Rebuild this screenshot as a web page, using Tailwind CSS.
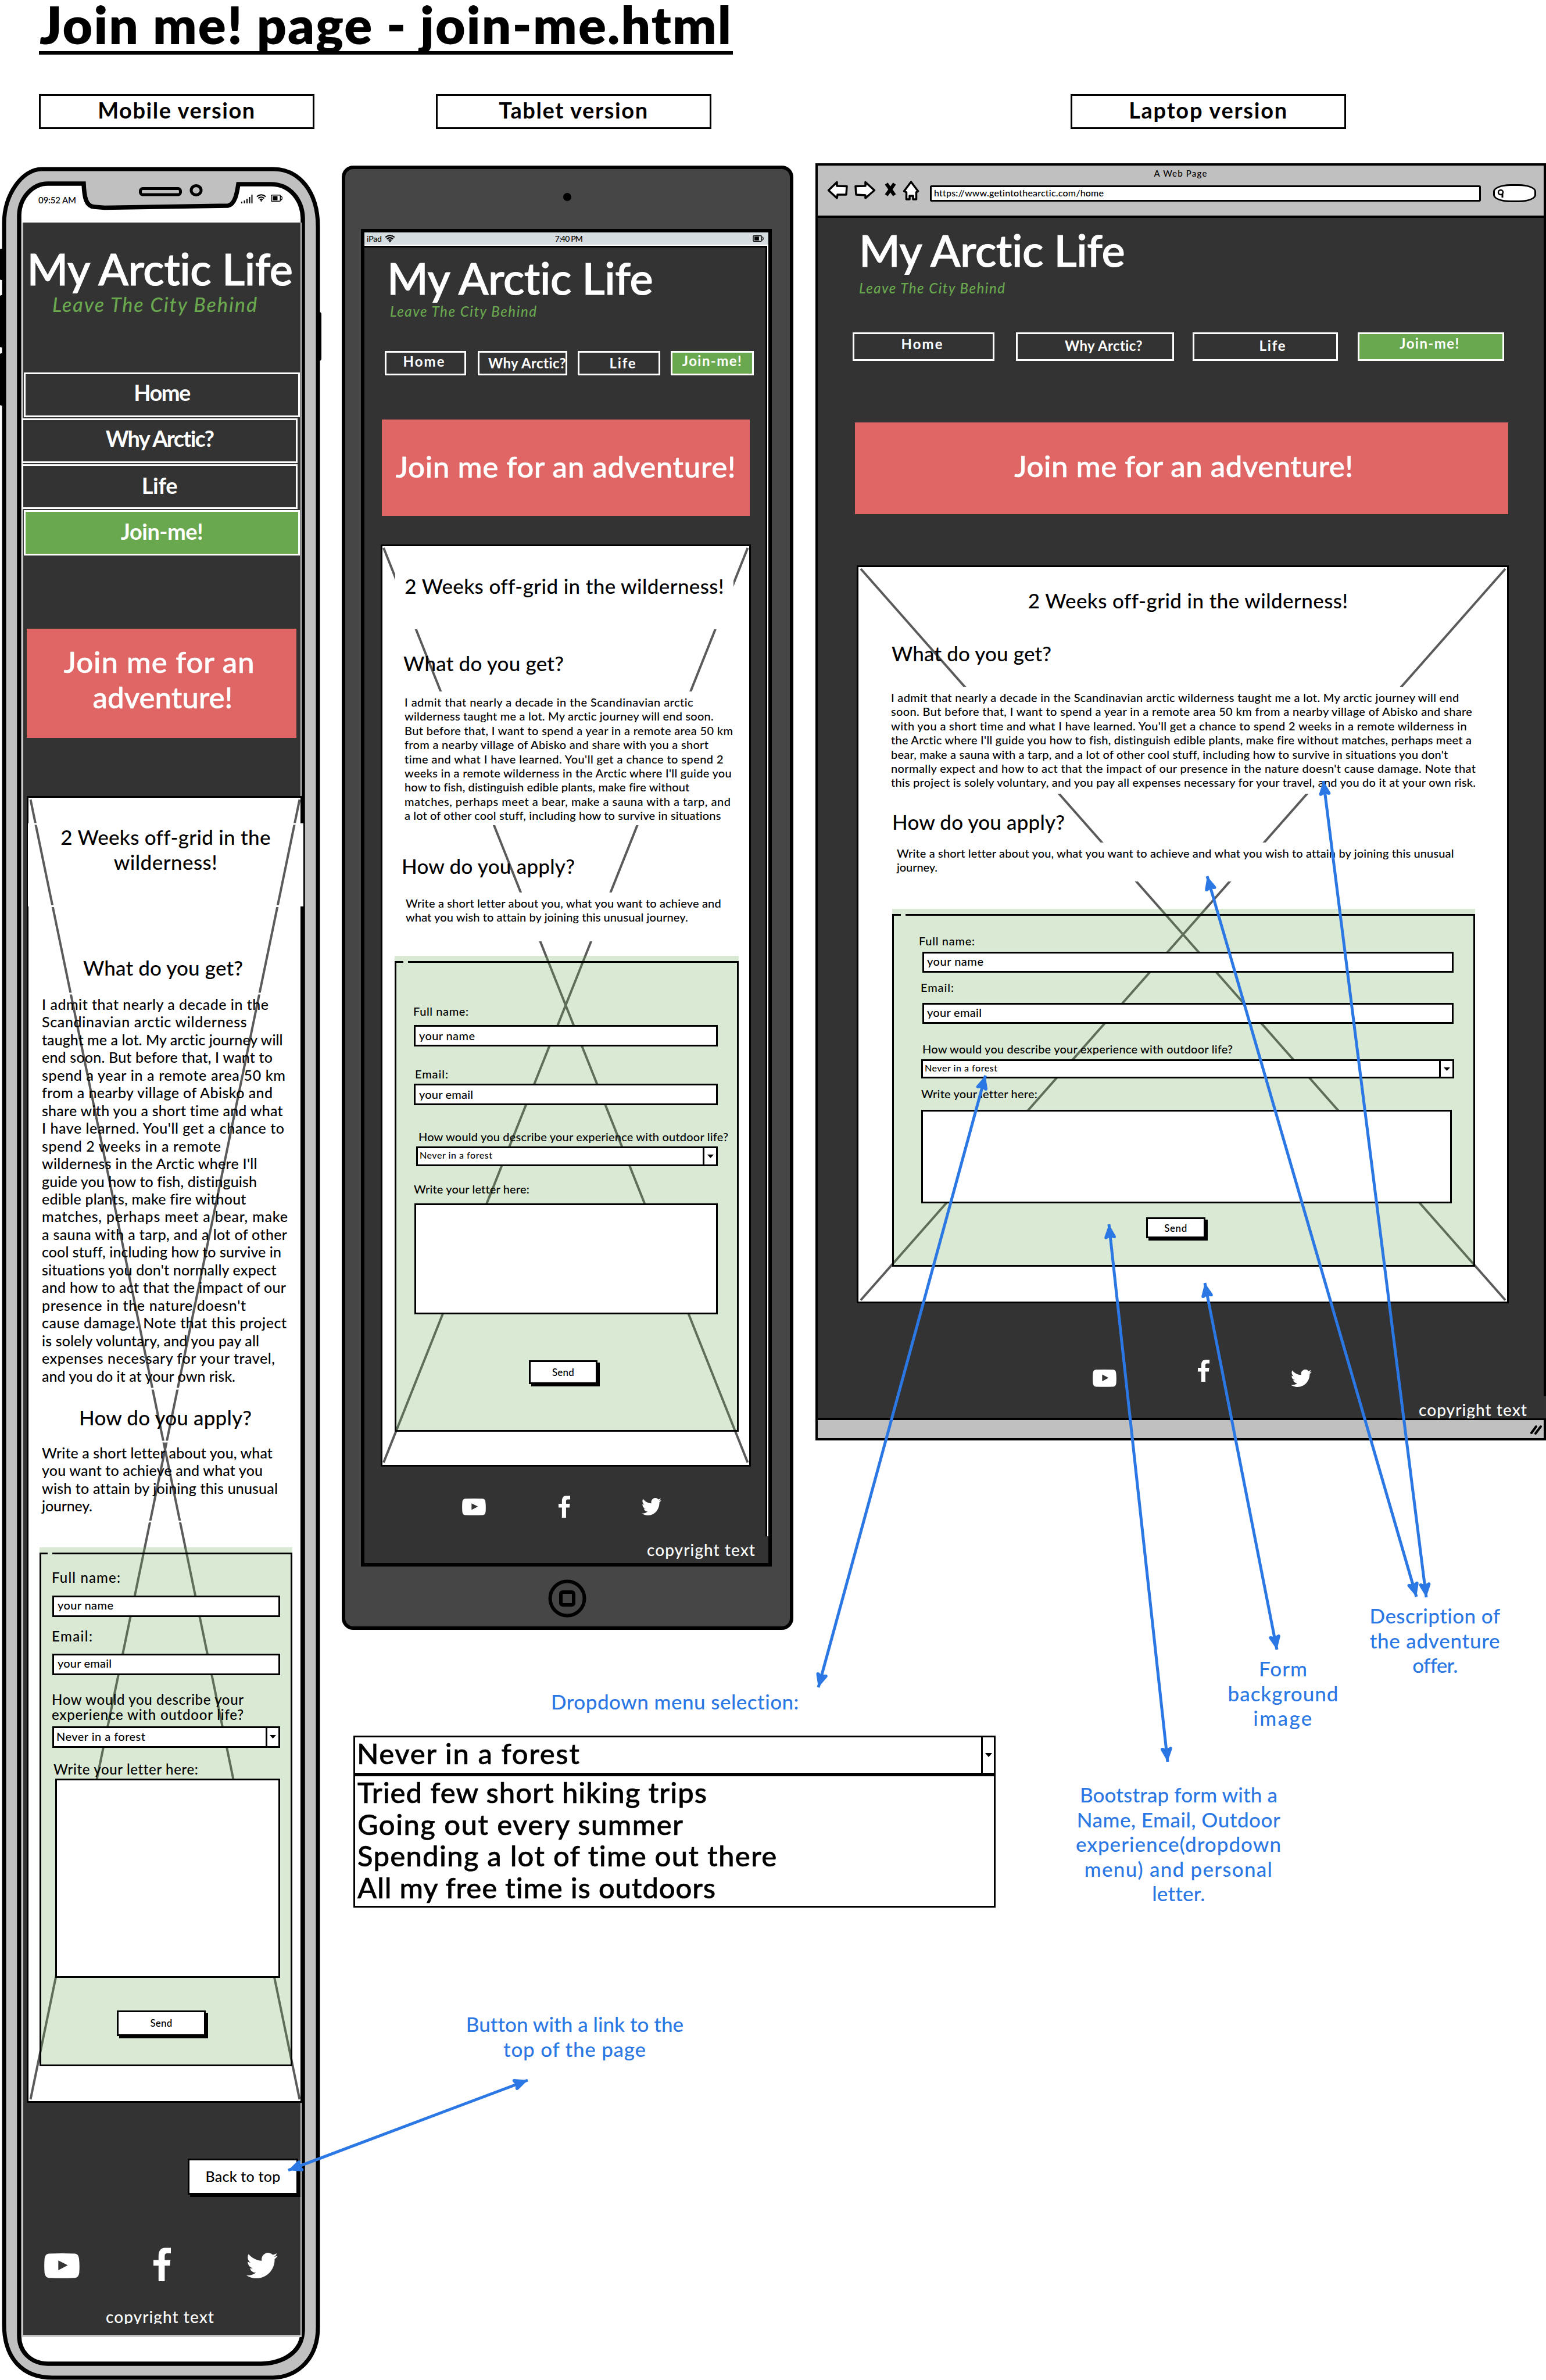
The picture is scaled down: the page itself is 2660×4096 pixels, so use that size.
<!DOCTYPE html>
<html lang="en">
<head>
<meta charset="utf-8">
<title>Join me! page - join-me.html</title>
<script src="https://cdn.jsdelivr.net/npm/@tailwindcss/browser@4"></script>
</head>
<body class="bg-white">
<svg class="hidden">
  <symbol id="yt" viewBox="0 0 168 101" preserveAspectRatio="none"><path fill-rule="evenodd" d="M22 1 Q84 -1 146 1 Q162 2 165 20 Q169 50 166 80 Q163 98 146 99 Q84 102 22 99 Q5 98 2 80 Q-1 50 2 20 Q5 2 22 1Z M67 29 V68 L112 48Z"/></symbol>
  <symbol id="fb" viewBox="0 0 82 135" preserveAspectRatio="none"><path d="M24 135V73H0V50H24V34C24 12 36 0 56 1H82V23H66C56 23 53 27 53 34V50H80L77 73H53V135Z"/></symbol>
  <symbol id="tw" viewBox="0 2.2 24 19.6" preserveAspectRatio="none"><path d="M23.953 4.57a10 10 0 01-2.825.775 4.958 4.958 0 002.163-2.723c-.951.555-2.005.959-3.127 1.184a4.92 4.92 0 00-8.384 4.482C7.69 8.095 4.067 6.13 1.64 3.162a4.822 4.822 0 00-.666 2.475c0 1.71.87 3.213 2.188 4.096a4.904 4.904 0 01-2.228-.616v.06a4.923 4.923 0 003.946 4.827 4.996 4.996 0 01-2.212.085 4.936 4.936 0 004.604 3.417 9.867 9.867 0 01-6.102 2.105c-.39 0-.779-.023-1.17-.067a13.995 13.995 0 007.557 2.209c9.053 0 13.998-7.496 13.998-13.985 0-.21 0-.42-.015-.63A9.935 9.935 0 0024 4.59z"/></symbol>
  <symbol id="wifi" viewBox="0 0 20 15"><g fill="none" stroke="#000" stroke-width="2.4"><path d="M1 5Q10 -2.5 19 5M4 8.5Q10 3.5 16 8.5M7 11.3Q10 9 13 11.3"/></g><circle cx="10" cy="13.4" r="1.6"/></symbol>
  <symbol id="bat" viewBox="0 0 20 12"><rect x=".8" y=".8" width="15.5" height="10.4" rx="1" fill="none" stroke="#000" stroke-width="1.4"/><rect x="3" y="2.5" width="8.5" height="7"/><path d="M17 3q2.5 0 2.5 3t-2.5 3" fill="none" stroke="#000" stroke-width="1.3"/></symbol>
</svg>

<main class="relative w-[2660px] h-[4096px] overflow-hidden bg-white font-['Lato',sans-serif] font-medium text-black whitespace-nowrap">

  <!-- Board title -->
  <header class="pl-[67px]">
    <h1 class="w-[1194px] h-[94px] pl-px border-b-6 border-black text-[89px] leading-[84px] font-extrabold"><span data-w="1190">Join me! page - join-me.html</span></h1>
    <div class="flex mt-[68px] text-[38px] font-bold">
      <div class="flex items-center justify-center w-[474px] h-[60px] border-3 pb-1.5"><span data-w="270">Mobile version</span></div>
      <div class="flex items-center justify-center w-[474px] h-[60px] ml-[209px] border-3 pb-1.5"><span data-w="256">Tablet version</span></div>
      <div class="flex items-center justify-center w-[474px] h-[60px] ml-[618px] border-3 pb-1.5"><span data-w="272">Laptop version</span></div>
    </div>
  </header>

  <!-- ============ Mobile ============ -->
  <section class="absolute left-0 top-[285px] w-[556px] h-[3811px]">
    <svg class="absolute inset-0" width="556" height="3811" viewBox="0 285 556 3811">
      <path d="M3 432v46M3 512v82M3 612v82M549 541v76" stroke="#000" stroke-width="8" stroke-linecap="round"/>
      <path d="M7 385C7 335 38 291 72 291H470C515 291 547 330 547 390V4005C547 4065 505 4092 470 4092H90C40 4092 7 4060 7 4000Z" fill="#c0c0c0" stroke="#000" stroke-width="7"/>
      <path d="M33 370C34 338 58 316 82 316H144C145 340 148 355 162 356L180 357.500 392 354C405 352 408 330 410 317H466C500 317 520 345 521 375V4010C520 4050 485 4067 450 4068H82C50 4067 33 4045 33 4020Z" fill="#fff" stroke="#000" stroke-width="7.500"/>
      <rect x="241.500" y="324.500" width="69" height="10.500" rx="4" fill="#c0c0c0" stroke="#000" stroke-width="5"/>
      <ellipse cx="337.500" cy="327.500" rx="8.500" ry="8" fill="#c0c0c0" stroke="#000" stroke-width="5"/>
      <path d="M416 350v-3M420.500 350v-5M425 350v-8M429.500 350v-11M433.500 350v-15" stroke="#000" stroke-width="2"/>
    </svg>
    <div class="relative flex items-center h-[98px] pl-[66px] pt-[20px] text-[15px]">
      <span data-w="65">09:52 AM</span>
      <svg class="ml-[310px] mb-[8px]" width="17" height="13"><use href="#wifi"/></svg>
      <svg class="ml-[8px] mb-[6px]" width="20" height="12"><use href="#bat"/></svg>
    </div>

    <div class="relative ml-[38px] w-[481px] h-[3639px] border-x-2 border-b-3 border-[#ccc] bg-[#333] text-white">
      <div class="w-[476px] text-center">
        <div class="pt-[39px] pr-[6px] text-[76px] leading-[80px] [-webkit-text-stroke:1.200px]"><span data-w="459">My Arctic Life</span></div>
        <div class="mt-[2px] pr-[22px] text-[34px] leading-[40px] italic text-[#6aa84f]"><span data-w="352">Leave The City Behind</span></div>
        <nav class="mt-[97px] flex flex-col gap-[2px] text-[38px] font-bold">
          <a class="ml-px h-[77px] border-3 bg-[#333] flex items-center justify-center pb-2"><span data-w="98">Home</span></a>
          <a class="-ml-[3px] mr-1 h-[77px] border-3 bg-[#333] flex items-center justify-center pb-2"><span data-w="188">Why Arctic?</span></a>
          <a class="-ml-[3px] mr-1 h-[77px] border-3 bg-[#333] flex items-center justify-center pb-1"><span data-w="62">Life</span></a>
          <a class="ml-px h-[78px] border-3 bg-[#6aa84f] flex items-center justify-center pb-1.5"><span data-w="142">Join-me!</span></a>
        </nav>
        <div class="mt-[126px] ml-[6px] w-[464px] h-[188px] pt-[26px] pr-[8px] bg-[#e06666] text-[51px] leading-[61px] [-webkit-text-stroke:0.600px]"><span data-w="328">Join me for an</span><br><span data-w="241" class="ml-[12px]">adventure!</span></div>
      </div>

      <div class="relative mt-[100px] ml-[6px] w-[474px] h-[2249px] border-3 border-black bg-white text-black">
        <h2 class="mt-[44px] -ml-px -mr-[5px] h-[143px] pt-[2px] bg-white text-center text-[35px] leading-[42.500px]"><span data-w="360">2 Weeks off-grid in the</span><br><span data-w="178">wilderness!</span></h2>
        <svg class="absolute left-0 top-0 overflow-visible" width="468" height="2243" viewBox="49 1373 468 2243">
          <path d="M52.500 1376L515.500 3613M515.500 1376L52.500 3613" stroke="#5b5b5b" stroke-width="4"/>
          <path d="M52 1418H516M52 1559.500H516M100 1710H470M200 2390H380M260 2481H310M220 2618.500H340" stroke="#fff" stroke-width="3"/>
        </svg>
        <div class="relative">
          <h3 class="mt-[84px] pl-[94px] text-[35px] leading-[42px]"><span data-w="275">What do you get?</span></h3>
          <p class="mt-[27px] pl-[23px] text-[25px] leading-[30.450px]">
            <span data-w="390">I admit that nearly a decade in the</span><br>
            <span data-w="353">Scandinavian arctic wilderness</span><br>
            <span data-w="415">taught me a lot. My arctic journey will</span><br>
            <span data-w="397">end soon. But before that, I want to</span><br>
            <span data-w="419">spend a year in a remote area 50 km</span><br>
            <span data-w="397">from a nearby village of Abisko and</span><br>
            <span data-w="415">share with you a short time and what</span><br>
            <span data-w="417">I have learned. You'll get a chance to</span><br>
            <span data-w="308">spend 2 weeks in a remote</span><br>
            <span data-w="371">wilderness in the Arctic where I'll</span><br>
            <span data-w="370">guide you how to fish, distinguish</span><br>
            <span data-w="351">edible plants, make fire without</span><br>
            <span data-w="423">matches, perhaps meet a bear, make</span><br>
            <span data-w="422">a sauna with a tarp, and a lot of other</span><br>
            <span data-w="411">cool stuff, including how to survive in</span><br>
            <span data-w="404">situations you don't normally expect</span><br>
            <span data-w="420">and how to act that the impact of our</span><br>
            <span data-w="351">presence in the nature doesn't</span><br>
            <span data-w="421">cause damage. Note that this project</span><br>
            <span data-w="374">is solely voluntary, and you pay all</span><br>
            <span data-w="401">expenses necessary for your travel,</span><br>
            <span data-w="333">and you do it at your own risk.</span>
          </p>
          <h3 class="mt-[35px] pl-[87px] text-[35px] leading-[42px]"><span data-w="297">How do you apply?</span></h3>
          <p class="mt-[25px] pl-[23px] text-[25px] leading-[30.450px]">
            <span data-w="396">Write a short letter about you, what</span><br>
            <span data-w="380">you want to achieve and what you</span><br>
            <span data-w="405">wish to attain by joining this unusual</span><br>
            <span data-w="87">journey.</span>
          </p>
        </div>
        <form class="relative mt-[56px] ml-[19px] w-[435px] h-[893px] pt-[9px] bg-[#6aa84f]/25">
          <div class="relative h-[884px] border-3 border-black text-[24px] leading-[28px]">
            <i class="absolute -top-[3px] left-[11px] w-[8px] h-[3px] bg-[#daead4]"></i>
            <label class="block pt-[26px] pl-[18px]"><span data-w="118">Full name:</span></label>
            <div class="mt-[17px] ml-[19px] w-[392px] h-[37px] flex items-center border-3 bg-white pl-[6px] pb-[4px] text-[20px]"><span data-w="96">your name</span></div>
            <label class="block mt-[19px] pl-[18px]"><span data-w="70">Email:</span></label>
            <div class="mt-[16px] ml-[19px] w-[392px] h-[37px] flex items-center border-3 bg-white pl-[6px] pb-[4px] text-[20px]"><span data-w="93">your email</span></div>
            <label class="block mt-[29px] pl-[18px] leading-[26.500px]"><span data-w="330">How would you describe your</span><br><span data-w="330">experience with outdoor life?</span></label>
            <div class="mt-[6px] ml-[19px] w-[392px] h-[37px] flex items-stretch justify-between border-3 bg-white pl-[4px] text-[20px]"><span data-w="153">Never in a forest</span><b class="w-[22px] flex items-center justify-center border-l-3"><svg width="11" height="6"><path d="M0 0H11L5.500 6Z"/></svg></b></div>
            <label class="block mt-[23px] pl-[21px]"><span data-w="248">Write your letter here:</span></label>
            <div class="mt-[2px] ml-[24px] w-[387px] h-[343px] border-3 bg-white"></div>
            <button type="button" class="mt-[56px] ml-[130px] w-[153px] h-[44px] block border-3 bg-white shadow-[4px_4px_0_#000] text-[17px] leading-none"><span data-w="38">Send</span></button>
          </div>
        </form>
      </div>

      <a class="mt-[96px] ml-[283px] w-[190px] h-[62px] flex items-center justify-center border-3 border-black bg-white text-black text-[25px] shadow-[4px_4px_0_#000]"><span data-w="129">Back to top</span></a>
      <div class="mt-[91px] pl-[36px] h-[58px] flex items-center fill-white">
        <svg class="mt-[4px]" width="61" height="43"><use href="#yt"/></svg>
        <svg class="ml-[127px]" width="30" height="58"><use href="#fb"/></svg>
        <svg class="mt-[4px] ml-[130px]" width="54" height="44"><use href="#tw"/></svg>
      </div>
      <div class="mt-[45px] h-[29px] overflow-hidden pr-[6px] text-center text-[28px] leading-[32px]"><span data-w="186">copyright text</span></div>
    </div>
  </section>

  <!-- ============ Tablet ============ -->
  <section class="absolute left-[588px] top-[285px] w-[777px] h-[2520px] rounded-[20px] border-6 border-black bg-[#464646]">
    <div class="h-[103px] flex items-center justify-center pb-[7px] pr-px"><i class="size-[14px] rounded-full bg-black"></i></div>
    <div class="relative ml-[27px] w-[707px] h-[2302px] border-6 border-black bg-white">
      <div class="h-[21px] flex items-center justify-between bg-[#d6dde1] pl-[4px] pr-[8px] text-[14px] leading-none">
        <div class="flex items-center gap-[5px]"><span data-w="26">iPad</span><svg width="18" height="13"><use href="#wifi"/></svg></div>
        <span data-w="48" class="mr-[18px]">7:40 PM</span>
        <svg width="19" height="11"><use href="#bat"/></svg>
      </div>
      <div class="mt-[2px] w-[693px] h-[2267px] border-t-3 border-r-3 border-black bg-[#333] text-white">
        <div class="pt-[12px] pl-[39px] text-[76px] leading-[80px] [-webkit-text-stroke:1.200px]"><span data-w="459">My Arctic Life</span></div>
        <div class="mt-[4px] pl-[44px] text-[24px] leading-[28px] italic text-[#6aa84f]"><span data-w="252">Leave The City Behind</span></div>
        <nav class="mt-[54px] pl-[35px] flex h-[42px] text-[24px] font-bold">
          <a class="w-[140px] flex items-center justify-center border-3 pb-[6px] pr-[4px]"><span data-w="71">Home</span></a>
          <a class="ml-[20px] w-[154px] flex items-center justify-center border-3 pl-[16px]"><span data-w="134">Why Arctic?</span></a>
          <a class="ml-[18px] w-[142px] flex items-center justify-center border-3 pl-[14px]"><span data-w="45">Life</span></a>
          <a class="ml-[18px] w-[143px] flex items-center justify-center border-3 bg-[#6aa84f] pb-[8px]"><span data-w="102">Join-me!</span></a>
        </nav>
        <div class="mt-[76px] ml-[30px] w-[633px] h-[166px] flex items-center justify-center bg-[#e06666] pb-[4px] text-[51px] [-webkit-text-stroke:0.600px]"><span data-w="585">Join me for an adventure!</span></div>

        <div class="relative mt-[49px] ml-[28px] w-[637px] h-[1587px] border-3 border-black bg-white text-black">
          <svg class="absolute left-0 top-0" width="631" height="1581" viewBox="658 940 631 1581"><path d="M660 943L1286.500 2517M1286.500 943L660 2517" stroke="#5b5b5b" stroke-width="4"/></svg>
          <div class="relative">
            <h2 class="mt-[30px] ml-[22px] w-[582px] h-[113px] pt-[17px] bg-white text-center text-[35px] leading-[42px]"><span data-w="548">2 Weeks off-grid in the wilderness!</span></h2>
            <h3 class="mt-[37px] pl-[36px] text-[35px] leading-[42px]"><span data-w="276">What do you get?</span></h3>
            <p class="mt-[28px] ml-[38px] w-[580px] h-[230px] pt-[6px] bg-white text-[20px] leading-[24.400px]">
              <span data-w="497">I admit that nearly a decade in the Scandinavian arctic</span><br>
              <span data-w="532">wilderness taught me a lot. My arctic journey will end soon.</span><br>
              <span data-w="565">But before that, I want to spend a year in a remote area 50 km</span><br>
              <span data-w="523">from a nearby village of Abisko and share with you a short</span><br>
              <span data-w="549">time and what I have learned. You'll get a chance to spend 2</span><br>
              <span data-w="563">weeks in a remote wilderness in the Arctic where I'll guide you</span><br>
              <span data-w="490">how to fish, distinguish edible plants, make fire without</span><br>
              <span data-w="561">matches, perhaps meet a bear, make a sauna with a tarp, and</span><br>
              <span data-w="544">a lot of other cool stuff, including how to survive in situations</span>
            </p>
            <h3 class="mt-[49px] pl-[33px] text-[35px] leading-[42px]"><span data-w="298">How do you apply?</span></h3>
            <p class="mt-[25px] ml-[40px] w-[578px] h-[84px] pt-[6px] bg-white text-[20px] leading-[24.400px]">
              <span data-w="542">Write a short letter about you, what you want to achieve and</span><br>
              <span data-w="485">what you wish to attain by joining this unusual journey.</span>
            </p>
          </div>
          <form class="relative mt-[25px] ml-[21px] w-[592px] h-[819px] pt-[9px] bg-[#6aa84f]/25">
            <div class="relative h-[810px] border-3 border-black text-[20px] leading-[24px]">
              <i class="absolute -top-[3px] left-[12px] w-[8px] h-[3px] bg-[#daead4]"></i>
              <label class="block pt-[71px] pl-[29px]"><span data-w="95">Full name:</span></label>
              <div class="mt-[12px] ml-[30px] w-[523px] h-[37px] flex items-center border-3 bg-white pl-[6px] pb-[2px]"><span data-w="96">your name</span></div>
              <label class="block mt-[35px] pl-[32px]"><span data-w="57">Email:</span></label>
              <div class="mt-[5px] ml-[30px] w-[523px] h-[37px] flex items-center border-3 bg-white pl-[6px] pb-[2px]"><span data-w="93">your email</span></div>
              <label class="block mt-[42px] pl-[38px]"><span data-w="533">How would you describe your experience with outdoor life?</span></label>
              <div class="mt-[5px] ml-[34px] w-[519px] h-[34px] flex items-stretch justify-between border-3 bg-white pl-[3px] text-[16px]"><span data-w="125">Never in a forest</span><b class="w-[23px] flex items-center justify-center border-l-3"><svg width="11" height="6"><path d="M0 0H11L5.500 6Z"/></svg></b></div>
              <label class="block mt-[27px] pl-[30px]"><span data-w="198">Write your letter here:</span></label>
              <div class="mt-[13px] ml-[31px] w-[522px] h-[191px] border-3 bg-white"></div>
              <button type="button" class="mt-[79px] ml-[228px] w-[118px] h-[41px] block border-3 bg-white shadow-[4px_4px_0_#000] text-[17px] leading-none"><span data-w="38">Send</span></button>
            </div>
          </form>
        </div>

        <div class="mt-[50px] pl-[168px] h-[38px] flex items-center fill-white">
          <svg width="41" height="29"><use href="#yt"/></svg>
          <svg class="ml-[125px]" width="20" height="38"><use href="#fb"/></svg>
          <svg class="ml-[123px]" width="34" height="30"><use href="#tw"/></svg>
        </div>
      </div>
      <div class="absolute right-0 bottom-0 w-[235px] h-[46px] bg-[#333] pl-[26px] pt-[7px] text-white text-[28px] leading-[32px]"><span data-w="186">copyright text</span></div>
    </div>
    <svg class="mt-[22px] ml-[349px]" width="66" height="66"><circle cx="33" cy="33" r="29.500" fill="none" stroke="#000" stroke-width="6"/><rect x="22" y="22" width="22" height="22" rx="3" fill="none" stroke="#000" stroke-width="6"/></svg>
  </section>

  <!-- ============ Laptop ============ -->
  <section class="absolute left-[1403px] top-[281px] w-[1257px] h-[2198px] border-4 border-black bg-[#333] text-white">
    <div class="h-[90px] border-b-4 border-black bg-[#c0c0c0] text-black">
      <div class="pt-[4px] text-center text-[15px] leading-[18px]"><span data-w="91">A Web Page</span></div>
      <div class="flex mt-[3px] pl-[16px]">
        <svg width="160" height="36" viewBox="1423 310 160 36">
          <g fill="#fff" stroke="#000" stroke-width="3.500" stroke-linejoin="round"><path d="M1425.500 327.500L1440 313.500V320L1457 320.500 1456 335H1441L1440 341Z"/><path d="M1504.500 327.500L1489 313.500V320L1472 320.500 1473 335 1489 336V341Z"/><path d="M1567.500 313L1579.500 329 1576.500 331V343H1571V337H1565V343H1559.500V331L1555.500 329Z"/></g>
          <path d="M1525 316L1539 336M1539 316L1525 336" stroke="#000" stroke-width="6"/>
        </svg>
        <div class="mt-[9px] ml-[17px] w-[948px] h-[28px] flex items-center border-3 bg-white rounded-[3px] pl-[4px] pb-[2px] text-[16px]"><span data-w="292">https://www.getintothearctic.com/home</span></div>
        <div class="mt-[7px] ml-[21px] w-[74px] h-[31px] flex items-center border-3 bg-white rounded-[40%] pl-[3px]"><svg width="14" height="16"><circle cx="7" cy="6" r="4" fill="none" stroke="#000" stroke-width="2.500"/><path d="M10 9V15" stroke="#000" stroke-width="3"/></svg></div>
      </div>
    </div>
    <div class="pt-[15px] pl-[71px] text-[76px] leading-[80px] [-webkit-text-stroke:1.200px]"><span data-w="459">My Arctic Life</span></div>
    <div class="mt-[12px] pl-[71px] text-[24px] leading-[28px] italic text-[#6aa84f]"><span data-w="251">Leave The City Behind</span></div>
    <nav class="mt-[62px] pl-[60px] flex h-[49px] text-[24px] font-bold">
      <a class="w-[244px] flex items-center justify-center border-3 pb-[10px] pr-[4px]"><span data-w="71">Home</span></a>
      <a class="ml-[37px] w-[272px] flex items-center justify-center border-3 pb-[4px] pl-[30px]"><span data-w="134">Why Arctic?</span></a>
      <a class="ml-[32px] w-[250px] flex items-center justify-center border-3 pb-[4px] pl-[26px]"><span data-w="45">Life</span></a>
      <a class="ml-[34px] w-[252px] flex items-center justify-center border-3 bg-[#6aa84f] pb-[12px] pr-[4px]"><span data-w="102">Join-me!</span></a>
    </nav>
    <div class="mt-[106px] ml-[64px] w-[1124px] h-[158px] flex items-center justify-center bg-[#e06666] pb-[8px] pl-[8px] text-[51px] [-webkit-text-stroke:0.600px]"><span data-w="583">Join me for an adventure!</span></div>

    <div class="relative mt-[88px] ml-[67px] w-[1122px] h-[1270px] border-3 border-black bg-white text-black">
      <svg class="absolute left-0 top-0" width="1116" height="1264" viewBox="1477 976 1116 1264"><path d="M1481 979L2590 2237.500M2590 979L1481 2237.500" stroke="#5b5b5b" stroke-width="4"/></svg>
      <div class="relative">
        <h2 class="pt-[36px] pl-[18px] text-center text-[35px] leading-[42px]"><span data-w="549">2 Weeks off-grid in the wilderness!</span></h2>
        <h3 class="mt-[49px] pl-[57px] text-[35px] leading-[42px]"><span data-w="275">What do you get?</span></h3>
        <p class="mt-[37px] ml-[56px] w-[1030px] h-[184px] pt-[6px] bg-white text-[20px] leading-[24.400px]">
          <span data-w="978">I admit that nearly a decade in the Scandinavian arctic wilderness taught me a lot. My arctic journey will end</span><br>
          <span data-w="1000">soon. But before that, I want to spend a year in a remote area 50 km from a nearby village of Abisko and share</span><br>
          <span data-w="991">with you a short time and what I have learned. You'll get a chance to spend 2 weeks in a remote wilderness in</span><br>
          <span data-w="999">the Arctic where I'll guide you how to fish, distinguish edible plants, make fire without matches, perhaps meet a</span><br>
          <span data-w="958">bear, make a sauna with a tarp, and a lot of other cool stuff, including how to survive in situations you don't</span><br>
          <span data-w="1006">normally expect and how to act that the impact of our presence in the nature doesn't cause damage. Note that</span><br>
          <span data-w="1006">this project is solely voluntary, and you pay all expenses necessary for your travel, and you do it at your own risk.</span>
        </p>
        <h3 class="mt-[27px] pl-[58px] text-[35px] leading-[42px]"><span data-w="297">How do you apply?</span></h3>
        <p class="mt-[15px] ml-[66px] w-[1020px] h-[67px] pt-[6px] bg-white text-[20px] leading-[24.400px]">
          <span data-w="957">Write a short letter about you, what you want to achieve and what you wish to attain by joining this unusual</span><br>
          <span data-w="70">journey.</span>
        </p>
      </div>
      <form class="relative mt-[47px] ml-[58px] w-[1003px] h-[616px] pt-[9px] bg-[#6aa84f]/25">
        <div class="relative h-[607px] border-3 border-black text-[20px] leading-[24px]">
          <i class="absolute -top-[3px] left-[12px] w-[8px] h-[3px] bg-[#daead4]"></i>
          <label class="block pt-[31px] pl-[43px]"><span data-w="96">Full name:</span></label>
          <div class="mt-[7px] ml-[49px] w-[914px] h-[36px] flex items-center border-3 bg-white pl-[5px] pb-[4px]"><span data-w="97">your name</span></div>
          <label class="block mt-[13px] pl-[46px]"><span data-w="57">Email:</span></label>
          <div class="mt-[15px] ml-[49px] w-[914px] h-[36px] flex items-center border-3 bg-white pl-[5px] pb-[4px]"><span data-w="94">your email</span></div>
          <label class="block mt-[31px] pl-[49px]"><span data-w="534">How would you describe your experience with outdoor life?</span></label>
          <div class="mt-[6px] ml-[47px] w-[917px] h-[33px] flex items-stretch justify-between border-3 bg-white pl-[3px] text-[16px]"><span data-w="125">Never in a forest</span><b class="w-[23px] flex items-center justify-center border-l-3"><svg width="11" height="6"><path d="M0 0H11L5.500 6Z"/></svg></b></div>
          <label class="block mt-[14px] pl-[47px]"><span data-w="199">Write your letter here:</span></label>
          <div class="mt-[16px] ml-[47px] w-[913px] h-[161px] border-3 bg-white"></div>
          <button type="button" class="mt-[24px] ml-[434px] w-[102px] h-[36px] block border-3 bg-white shadow-[4px_4px_0_#000] text-[17px] leading-none"><span data-w="39">Send</span></button>
        </div>
      </form>
    </div>

    <div class="mt-[97px] pl-[473px] h-[47px] flex items-end fill-white">
      <svg width="41" height="30"><use href="#yt"/></svg>
      <svg class="ml-[140px] mb-[9px]" width="20" height="38"><use href="#fb"/></svg>
      <svg class="ml-[140px]" width="36" height="30"><use href="#tw"/></svg>
    </div>
    <div class="absolute inset-x-0 bottom-0 h-[35px] border-t-4 border-black bg-[#c0c0c0]">
      <svg class="absolute right-[3px] bottom-[6px]" width="20" height="18"><path d="M2 15L10 4M9 16L18 4" stroke="#000" stroke-width="4" stroke-linecap="round"/></svg>
    </div>
    <div class="absolute -right-1 bottom-[34px] w-[256px] h-[38px] overflow-hidden bg-[#333] pl-[37px] pt-[7px] text-[28px] leading-[32px]"><span data-w="186">copyright text</span></div>
  </section>

  <!-- Dropdown detail -->
  <section class="absolute left-[608px] top-[2987px] w-[1105px] text-[49px] [-webkit-text-stroke:0.600px]">
    <div class="h-[67px] flex items-stretch justify-between border-3 pl-[3px] leading-[54px]"><span data-w="383">Never in a forest</span><b class="w-[22px] flex items-center justify-center border-l-3"><svg width="12" height="7"><path d="M0 0H12L6 7Z"/></svg></b></div>
    <ul class="h-[229px] border-3 pl-[4px] leading-[54.500px]">
      <li><span data-w="601">Tried few short hiking trips</span></li>
      <li><span data-w="560">Going out every summer</span></li>
      <li><span data-w="722">Spending a lot of time out there</span></li>
      <li><span data-w="617">All my free time is outdoors</span></li>
    </ul>
  </section>

  <!-- Annotations -->
  <p class="absolute left-[948px] top-[2907px] text-[35px] leading-[42.700px] text-[#2b78e4]"><span data-w="427">Dropdown menu selection:</span></p>
  <p class="absolute left-[789px] w-[400px] top-[3462px] text-center text-[35px] leading-[42.700px] text-[#2b78e4]"><span data-w="373">Button with a link to the</span><br><span data-w="245">top of the page</span></p>
  <p class="absolute left-[2319px] w-[300px] top-[2759px] text-center text-[35px] leading-[42.500px] text-[#2b78e4]"><span data-w="225">Description of</span><br><span data-w="224">the adventure</span><br><span data-w="77">offer.</span></p>
  <p class="absolute left-[2058px] w-[300px] top-[2850px] text-center text-[35px] leading-[42.500px] text-[#2b78e4]"><span data-w="83">Form</span><br><span data-w="190">background</span><br><span data-w="101">image</span></p>
  <p class="absolute left-[1827px] w-[402px] top-[3067px] text-center text-[35px] leading-[42.600px] text-[#2b78e4]"><span data-w="340">Bootstrap form with a</span><br><span data-w="350">Name, Email, Outdoor</span><br><span data-w="353">experience(dropdown</span><br><span data-w="323">menu) and personal</span><br><span data-w="90">letter.</span></p>

  <!-- Connectors -->
  <svg class="absolute inset-0" width="2660" height="4096">
    <defs><marker id="tip" viewBox="0 0 26 22" refX="25" refY="11" markerWidth="26" markerHeight="22" markerUnits="userSpaceOnUse" orient="auto-start-reverse"><path d="M25 11L4 1Q0 0 0 4L3 11 0 17Q0 22 5 20Z" fill="#2b78e4"/></marker></defs>
    <g stroke="#2b78e4" stroke-width="5">
      <path marker-start="url(#tip)" marker-end="url(#tip)" d="M1695.500 1851L1408 2904"/>
      <path marker-start="url(#tip)" marker-end="url(#tip)" d="M1908 2107L2009 3032"/>
      <path marker-start="url(#tip)" marker-end="url(#tip)" d="M2073 2208L2197 2839"/>
      <path marker-start="url(#tip)" marker-end="url(#tip)" d="M2077 1508L2437 2748"/>
      <path marker-start="url(#tip)" marker-end="url(#tip)" d="M2277 1344L2454 2749"/>
      <path marker-start="url(#tip)" marker-end="url(#tip)" d="M496 3735L908 3580"/>
    </g>
  </svg>
</main>

<script>
  // Fits every text line to its drawn width by spreading the difference between letters.
  function fitLines() {
    document.querySelectorAll('[data-w]').forEach(function (el) {
      el.style.letterSpacing = '0px';
      var range = document.createRange();
      range.selectNodeContents(el);
      var gap = (el.dataset.w - range.getBoundingClientRect().width) / (el.textContent.length - 1);
      el.style.letterSpacing = gap.toFixed(3) + 'px';
    });
  }
  window.addEventListener('load', function () {
    fitLines();
    document.fonts.ready.then(fitLines);
    setTimeout(fitLines, 100);
  });
</script>
</body>
</html>
